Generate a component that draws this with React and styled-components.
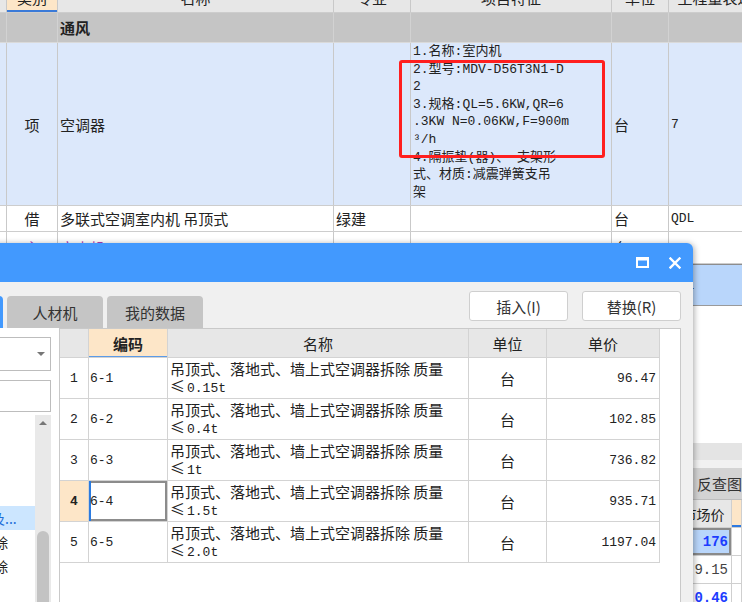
import React from "react";
import styled, { createGlobalStyle } from "styled-components";

const CJK = `"Noto Sans CJK SC", "Noto Sans", sans-serif`;
const MONO = `"Liberation Mono", "Noto Sans CJK SC", monospace`;

const GlobalStyle = createGlobalStyle`
  * { box-sizing: border-box; }
  html, body { margin: 0; padding: 0; background: #fff; }
  body { font-family: ${CJK}; color: #222; }
`;

const Screen = styled.div`
  position: relative;
  width: 742px;
  height: 602px;
  overflow: hidden;
  display: flex;
  flex-direction: column;
  background: #fff;
`;

/* ---------- background sheet ---------- */

const Sheet = styled.div`
  margin-top: -17px;
  flex-shrink: 0;
`;

const SheetRow = styled.div`
  display: grid;
  grid-template-columns: 7px 51px 276px 77px 201px 57px 108px;
  height: ${(p) => p.$h}px;
  background: ${(p) => p.$bg || "#fff"};
  border-bottom: 1px solid ${(p) => p.$line || "#cdcdcd"};
  ${(p) => p.$selected && `border-top: 1px solid #8d8d8d; border-bottom-color: #9a9a9a;`}
`;

const SheetCell = styled.div`
  border-right: 1px solid ${(p) => p.$line || "#c9c9c9"};
  display: flex;
  align-items: ${(p) => (p.$top ? "flex-start" : "center")};
  justify-content: ${(p) => (p.$center ? "center" : "flex-start")};
  padding: ${(p) => (p.$top ? "5px 2px 0" : "0 2px")};
  font-family: ${(p) => (p.$mono ? MONO : CJK)};
  font-size: ${(p) => (p.$mono ? 13 : 15)}px;
  font-weight: ${(p) => (p.$bold ? 700 : 400)};
  color: ${(p) => p.$color || "#222"};
  white-space: nowrap;
  overflow: hidden;
  background: ${(p) => (p.$active ? "#fde6c8" : "transparent")};
  box-shadow: ${(p) => (p.$active ? "inset 0 -2px 0 #3a7ad8" : "none")};
`;

const Feature = styled.div`
  border-right: 1px solid #c9c9c9;
  padding: 0 2px;
  font-family: ${MONO};
  font-size: 13px;
  line-height: 17.6px;
  color: #222;
  white-space: nowrap;
`;

const Highlight = styled.div`
  position: absolute;
  left: 399px;
  top: 60px;
  width: 206px;
  height: 98px;
  border: 3px solid #ff1f1f;
  border-radius: 3px;
`;

/* ---------- lower background pane ---------- */

const LowerPane = styled.div`
  margin-top: auto;
  height: 159px;
  flex-shrink: 0;
  display: flex;
  flex-direction: column;
`;

const Splitter = styled.div`
  height: 25px;
  flex-shrink: 0;
  background: #e4e4e4;
  border-bottom: 8px solid #f1f1f1;
`;

const TabStrip = styled.div`
  height: 32px;
  flex-shrink: 0;
  background: #d3d3d3;
  border-bottom: 1px solid #bdbdbd;
  display: grid;
  grid-template-columns: 697px 1fr;
  align-items: center;
  white-space: nowrap;
  overflow: hidden;
  font-size: 15px;
  color: #333;
`;

const StripTabs = styled.div`
  display: flex;
  gap: 24px;
  padding-left: 12px;
  overflow: hidden;
`;

const LowerRow = styled.div`
  display: grid;
  grid-template-columns: 680px 52px 1fr;
  height: 28px;
  flex-shrink: 0;
`;

const LowerCell = styled.div`
  border-right: 1px solid #cfcfcf;
  border-bottom: 1px solid #cfcfcf;
  display: flex;
  align-items: center;
  justify-content: ${(p) => (p.$head ? "center" : "flex-end")};
  padding-right: ${(p) => (p.$head ? 4 : 3)}px;
  font-family: ${(p) => (p.$head ? CJK : MONO)};
  font-size: 14px;
  font-weight: ${(p) => (p.$bold ? 700 : 400)};
  color: ${(p) => (p.$blue ? "#1c3cff" : p.$head ? "#222" : "#444")};
  background: ${(p) => (p.$peach ? "#fde6c8" : p.$head ? "#e7e7e7" : p.$sel ? "#b9d6fb" : "#fff")};
  box-shadow: ${(p) =>
    p.$sel ? "inset 0 0 0 2px #8a8a8a" : p.$peach ? "inset 0 -2px 0 #2f7ae0" : "none"};
  white-space: nowrap;
`;

/* ---------- dialog ---------- */

const Dialog = styled.div`
  position: absolute;
  left: -100px;
  top: 243px;
  width: 793px;
  height: 380px;
  background: #f0f0f0;
  border-top-right-radius: 6px;
  box-shadow: 1px 1px 6px rgba(0, 0, 0, 0.35);
  display: flex;
  flex-direction: column;
`;

const TitleBar = styled.div`
  height: 39px;
  flex-shrink: 0;
  background: #4299fe;
  border-top-right-radius: 6px;
  display: flex;
  align-items: center;
  justify-content: flex-end;
  gap: 20px;
  padding-right: 12px;
`;

const Toolbar = styled.div`
  height: 46px;
  flex-shrink: 0;
  display: flex;
  justify-content: space-between;
  padding: 0 12px 0 7px;
`;

const Tabs = styled.div`
  display: flex;
  gap: 4px;
  align-self: flex-end;
`;

const Tab = styled.div`
  width: 96px;
  height: 32px;
  border-radius: 4px 4px 0 0;
  background: ${(p) => (p.$active ? "#4299fe" : "#c5c5c5")};
  color: ${(p) => (p.$active ? "#fff" : "#333")};
  font-size: 15px;
  display: flex;
  align-items: center;
  justify-content: center;
`;

const Buttons = styled.div`
  display: flex;
  gap: 14px;
  margin-top: 9px;
`;

const Button = styled.button`
  width: 99px;
  height: 30px;
  background: #fff;
  border: 1px solid #cfcfcf;
  border-radius: 3px;
  font-family: ${CJK};
  font-size: 15px;
  color: #333;
  padding: 0;
`;

const Content = styled.div`
  flex: 1;
  min-height: 0;
  display: flex;
`;

const LeftPanel = styled.div`
  width: 160px;
  flex-shrink: 0;
  background: #fff;
  border-right: 1px solid #c9c9c9;
  display: flex;
  flex-direction: column;
  padding: 9px 8px 0 6px;
  overflow: hidden;
`;

const SelectBox = styled.div`
  height: 34px;
  flex-shrink: 0;
  border: 1px solid #bdbdbd;
  display: flex;
  align-items: center;
  justify-content: flex-end;
  padding-right: 5px;
`;

const Caret = styled.div`
  width: 0;
  height: 0;
  flex-shrink: 0;
  border-left: 4px solid transparent;
  border-right: 4px solid transparent;
  border-${(p) => (p.$up ? "bottom" : "top")}: 4px solid #777;
`;

const InputBox = styled.div`
  height: 32px;
  flex-shrink: 0;
  margin-top: 9px;
  border: 1px solid #bdbdbd;
`;

const ListRow = styled.div`
  flex: 1;
  min-height: 0;
  margin-top: 3px;
  display: flex;
`;

const ListBody = styled.div`
  flex: 1;
  padding-top: 19px;
  overflow: hidden;
`;

const ListItem = styled.div`
  height: 24px;
  display: flex;
  align-items: center;
  padding-left: ${(p) => (p.$active ? 1 : 4)}px;
  font-size: 14px;
  white-space: nowrap;
  color: ${(p) => (p.$active ? "#1e6fd9" : "#222")};
  background: ${(p) => (p.$active ? "#cce6ff" : "transparent")};
`;

const Scrollbar = styled.div`
  width: 16px;
  background: #e9e9e9;
  display: flex;
  flex-direction: column;
  align-items: center;
  padding-top: 6px;
`;

const Thumb = styled.div`
  width: 12px;
  height: 120px;
  flex-shrink: 0;
  margin-top: 106px;
  border-radius: 6px;
  background: #c3c3c3;
`;

const TableWrap = styled.div`
  width: 621px;
  flex-shrink: 0;
  background: #fff;
  border-top: 1px solid #c9c9c9;
  border-right: 1px solid #c9c9c9;
`;

const GridRow = styled.div`
  display: grid;
  grid-template-columns: 29px 79px 301px 78px 113px;
  height: ${(p) => p.$h}px;
`;

const GridCell = styled.div`
  border-right: 1px solid #d3d3d3;
  border-bottom: 1px solid #d3d3d3;
  display: flex;
  align-items: center;
  justify-content: ${(p) => p.$align || "flex-start"};
  padding: 0 ${(p) => (p.$align === "flex-end" ? 3 : 1)}px;
  font-family: ${(p) => (p.$mono ? MONO : CJK)};
  font-size: ${(p) => (p.$mono ? 13 : 15)}px;
  font-weight: ${(p) => (p.$bold ? 700 : 400)};
  color: #222;
  background: ${(p) => (p.$peach ? "#fde6c8" : p.$head ? "#e7e7e7" : "#fff")};
  box-shadow: ${(p) =>
    p.$focus
      ? "inset 2px 0 0 #2b7be0, inset 0 0 0 2px #8c8c8c"
      : p.$peach && p.$head
      ? "inset 0 -1px 0 #5b9be8"
      : "none"};
  white-space: nowrap;
`;

const NameCell = styled.div`
  border-right: 1px solid #d3d3d3;
  border-bottom: 1px solid #d3d3d3;
  padding: 2px 2px 0;
  white-space: nowrap;
  overflow: hidden;
`;

const NameLine = styled.div`
  height: 17px;
  line-height: 17px;
  font-family: ${(p) => (p.$mono ? MONO : CJK)};
  font-size: ${(p) => (p.$mono ? 13 : 15)}px;
`;

const Sym = styled.span`
  font-family: ${CJK};
  font-size: 15px;
  margin-right: 2px;
`;

const features = [
  "1.名称:室内机",
  "2.型号:MDV-D56T3N1-D",
  "2",
  "3.规格:QL=5.6KW,QR=6",
  ".3KW N=0.06KW,F=900m",
  "³/h",
  "4.隔振垫(器)、 支架形",
  "式、材质:减震弹簧支吊",
  "架",
];

const quotas = [
  { no: "1", code: "6-1", limit: "0.15t", price: "96.47" },
  { no: "2", code: "6-2", limit: "0.4t", price: "102.85" },
  { no: "3", code: "6-3", limit: "1t", price: "736.82" },
  { no: "4", code: "6-4", limit: "1.5t", price: "935.71", active: true },
  { no: "5", code: "6-5", limit: "2.0t", price: "1197.04" },
];

const MaxIcon = () => (
  <svg width="13" height="11" viewBox="0 0 13 11">
    <rect x="1" y="1.5" width="11" height="8.5" fill="none" stroke="#fff" strokeWidth="2" />
    <rect x="0" y="0" width="13" height="3.5" fill="#fff" />
  </svg>
);

const CloseIcon = () => (
  <svg width="12" height="12" viewBox="0 0 12 12">
    <path d="M1.5 1.5 L10.5 10.5 M10.5 1.5 L1.5 10.5" stroke="#fff" strokeWidth="2.4" strokeLinecap="square" />
  </svg>
);

const App = () => {
  return (
    <Screen>
      <GlobalStyle />

      {/* background sheet */}
      <Sheet>
        <SheetRow $h={30} $bg="#e7e7e7">
          <SheetCell />
          <SheetCell $center $active>类别</SheetCell>
          <SheetCell $center>名称</SheetCell>
          <SheetCell $center>专业</SheetCell>
          <SheetCell $center>项目特征</SheetCell>
          <SheetCell $center>单位</SheetCell>
          <SheetCell $center>工程量表达式</SheetCell>
        </SheetRow>
        <SheetRow $h={30} $bg="#c5c5c5" $line="#dadada">
          <SheetCell $line="#d2d2d2" />
          <SheetCell $line="#d2d2d2" />
          <SheetCell $line="#d2d2d2" $bold>通风</SheetCell>
          <SheetCell $line="#d2d2d2" />
          <SheetCell $line="#d2d2d2" />
          <SheetCell $line="#d2d2d2" />
          <SheetCell $line="#d2d2d2" />
        </SheetRow>
        <SheetRow $h={163} $bg="#dce8fb">
          <SheetCell />
          <SheetCell $center>项</SheetCell>
          <SheetCell>空调器</SheetCell>
          <SheetCell />
          <Feature>
            {features.map((line, i) => (
              <div key={i}>{line}</div>
            ))}
          </Feature>
          <SheetCell>台</SheetCell>
          <SheetCell $mono>7</SheetCell>
        </SheetRow>
        <SheetRow $h={26}>
          <SheetCell />
          <SheetCell $center>借</SheetCell>
          <SheetCell>多联式空调室内机 吊顶式</SheetCell>
          <SheetCell>绿建</SheetCell>
          <SheetCell />
          <SheetCell>台</SheetCell>
          <SheetCell $mono>QDL</SheetCell>
        </SheetRow>
        <SheetRow $h={32}>
          <SheetCell />
          <SheetCell $center $top $color="#b43cb4">主</SheetCell>
          <SheetCell $top $color="#b43cb4">室内机</SheetCell>
          <SheetCell />
          <SheetCell />
          <SheetCell $top>台</SheetCell>
          <SheetCell />
        </SheetRow>
        <SheetRow $h={42} $bg="#b9d6fb" $selected>
          <SheetCell />
          <SheetCell />
          <SheetCell />
          <SheetCell />
          <SheetCell />
          <SheetCell />
          <SheetCell $mono>QDL</SheetCell>
        </SheetRow>
      </Sheet>
      <Highlight />

      {/* lower pane behind the dialog */}
      <LowerPane>
        <Splitter />
        <TabStrip>
          <StripTabs>
            <span>工料机显示</span>
            <span>单价构成</span>
            <span>标准换算</span>
            <span>换算信息</span>
            <span>特征及内容</span>
          </StripTabs>
          <span>反查图形工程量</span>
        </TabStrip>
        <LowerRow>
          <LowerCell $head />
          <LowerCell $head>市场价</LowerCell>
          <LowerCell $head $peach />
        </LowerRow>
        <LowerRow>
          <LowerCell />
          <LowerCell $sel $bold $blue>176</LowerCell>
          <LowerCell />
        </LowerRow>
        <LowerRow>
          <LowerCell />
          <LowerCell>9.15</LowerCell>
          <LowerCell />
        </LowerRow>
        <LowerRow>
          <LowerCell />
          <LowerCell $bold $blue>0.46</LowerCell>
          <LowerCell />
        </LowerRow>
      </LowerPane>

      {/* quota dialog */}
      <Dialog>
        <TitleBar>
          <MaxIcon />
          <CloseIcon />
        </TitleBar>
        <Toolbar>
          <Tabs>
            <Tab $active>清单指引</Tab>
            <Tab>人材机</Tab>
            <Tab>我的数据</Tab>
          </Tabs>
          <Buttons>
            <Button>插入(I)</Button>
            <Button>替换(R)</Button>
          </Buttons>
        </Toolbar>
        <Content>
          <LeftPanel>
            <SelectBox>
              <Caret />
            </SelectBox>
            <InputBox />
            <ListRow>
              <ListBody>
                <ListItem>通风空调工程</ListItem>
                <ListItem>空调器安装</ListItem>
                <ListItem>风机盘管安装</ListItem>
                <ListItem $active>通风空调设备及...</ListItem>
                <ListItem>吊顶式空调拆除</ListItem>
                <ListItem>落地式空调拆除</ListItem>
              </ListBody>
              <Scrollbar>
                <Caret $up />
                <Thumb />
              </Scrollbar>
            </ListRow>
          </LeftPanel>

          <TableWrap>
            <GridRow $h={29}>
              <GridCell $head />
              <GridCell $head $peach $bold $align="center">编码</GridCell>
              <GridCell $head $align="center">名称</GridCell>
              <GridCell $head $align="center">单位</GridCell>
              <GridCell $head $align="center">单价</GridCell>
            </GridRow>
            {quotas.map((q) => (
              <GridRow key={q.no} $h={41}>
                <GridCell $mono $align="center" $peach={q.active} $bold={q.active}>
                  {q.no}
                </GridCell>
                <GridCell $mono $focus={q.active}>{q.code}</GridCell>
                <NameCell>
                  <NameLine>吊顶式、落地式、墙上式空调器拆除 质量</NameLine>
                  <NameLine $mono>
                    <Sym>≤</Sym>
                    {q.limit}
                  </NameLine>
                </NameCell>
                <GridCell $align="center">台</GridCell>
                <GridCell $mono $align="flex-end">{q.price}</GridCell>
              </GridRow>
            ))}
          </TableWrap>
        </Content>
      </Dialog>
    </Screen>
  );
};

export default App;
